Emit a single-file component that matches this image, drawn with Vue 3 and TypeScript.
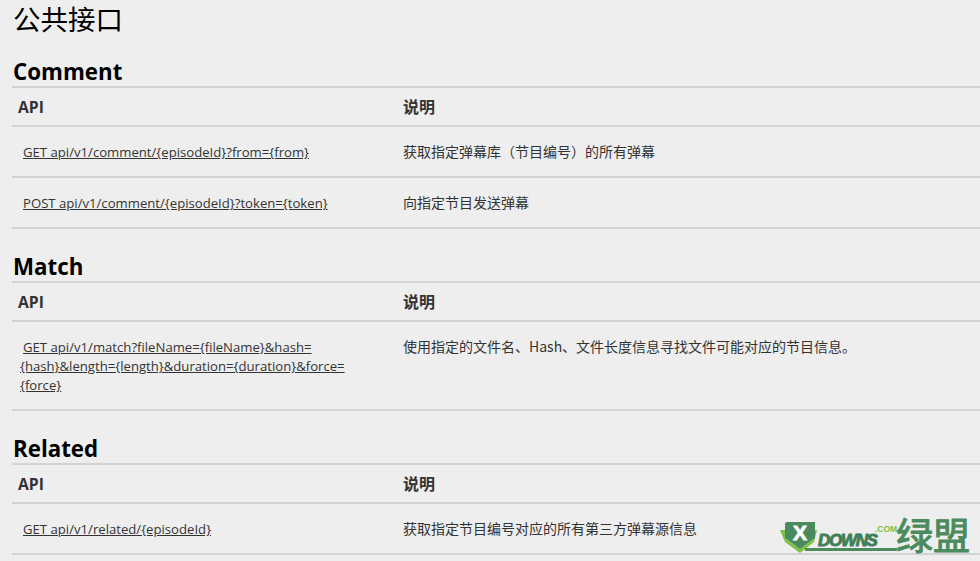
<script setup lang="ts">
interface Row { api: string; desc: string }
interface Section { name: string; rows: Row[] }
const sections: Section[] = [
  { name: 'Comment', rows: [
    { api: 'GET api/v1/comment/{episodeId}?from={from}', desc: '获取指定弹幕库（节目编号）的所有弹幕' },
    { api: 'POST api/v1/comment/{episodeId}?token={token}', desc: '向指定节目发送弹幕' },
  ] },
  { name: 'Match', rows: [
    { api: 'GET api/v1/match?fileName={fileName}&hash={hash}&length={length}&duration={duration}&force={force}', desc: '使用指定的文件名、Hash、文件长度信息寻找文件可能对应的节目信息。' },
  ] },
  { name: 'Related', rows: [
    { api: 'GET api/v1/related/{episodeId}', desc: '获取指定节目编号对应的所有第三方弹幕源信息' },
  ] },
]
</script>

<template>
  <div class="page">
    <h1 class="title">公共接口</h1>
    <section v-for="s in sections" :key="s.name" class="section">
      <h2 class="name">{{ s.name }}</h2>
      <div class="head row">
        <div class="c1">API</div>
        <div class="c2">说明</div>
      </div>
      <div v-for="r in s.rows" :key="r.api" class="body row">
        <div class="c1"><a class="link">{{ r.api }}</a></div>
        <div class="c2">{{ r.desc }}</div>
      </div>
    </section>
    <div class="logo">
      <svg class="shield" width="40" height="36" viewBox="0 0 40 36">
        <path d="M0 10 H6 V19 L20 29 L34 19 V10 H37 L34 22 L20 33 L5 22 Z" fill="#7cc242" />
        <path d="M7 2 H35 V18 L20 29 L5 18 V4 Q5 2 7 2 Z" fill="#4a8a5c" />
      </svg>
      <span class="x">X</span>
      <span class="downs">DOWNS</span>
      <span class="com">.COM</span>
      <span class="cn">绿盟</span>
      <span class="bar"></span>
    </div>
  </div>
</template>

<style>
html, body { margin: 0; background: #eeeeee; }
</style>

<style scoped>
.page {
  position: relative;
  width: 980px;
  height: 561px;
  overflow: hidden;
  padding-left: 12px;
  box-sizing: border-box;
  background: #eeeeee;
  font-family: "Open Sans", "Noto Sans CJK SC", sans-serif;
  color: #333333;
}
.title {
  margin: 0;
  height: 36px;
  padding-left: 1px;
  font-family: "Liberation Serif", "Noto Sans CJK SC", serif;
  font-weight: 400;
  font-size: 27.5px;
  line-height: 42px;
  color: #000;
}
.section { margin-bottom: 20px; }
.section:first-of-type { margin-top: 18px; }
.name {
  margin: 0;
  height: 32px;
  padding-left: 1px;
  font-size: 22.3px;
  line-height: 36px;
  font-weight: 700;
  color: #000;
  white-space: nowrap;
}
.row {
  display: grid;
  grid-template-columns: 391px 1fr;
  border-top: 2px solid #d3d3d3;
  font-size: 13px;
}
.head {
  height: 37px;
  font-size: 16px;
  font-weight: 700;
  line-height: 39px;
}
.head .c1 { padding-left: 6px; font-size: 15.7px; }
.body { padding: 16px 0 14px; line-height: 19px; }
.body:last-child { border-bottom: 2px solid #d3d3d3; }
.body .c1 { padding-left: 8px; padding-right: 30px; text-indent: 3px; font-size: 13.15px; overflow-wrap: anywhere; }
.body .c2 { font-family: "Noto Sans CJK SC", sans-serif; font-size: 14px; line-height: 17px; }
.link { text-decoration: underline; color: #333; }
.logo {
  position: absolute;
  left: 780px;
  top: 516px;
  width: 192px;
  height: 40px;
}
.shield { position: absolute; left: 0; top: 4px; }
.x {
  position: absolute; left: 13px; top: 6px;
  font: 700 21px/22px "Liberation Sans", sans-serif; color: #fff;
  -webkit-text-stroke: 0.8px #fff;
}
.downs {
  position: absolute; left: 38px; top: 15px;
  font: italic 700 17px/20px "Liberation Sans", sans-serif; color: #3f7f58;
  letter-spacing: -1.3px;
  -webkit-text-stroke: 0.9px #3f7f58;
}
.com {
  position: absolute; left: 95px; top: 8px;
  font: 700 8.5px/10px "Liberation Sans", sans-serif; color: #7cc242;
}
.cn {
  position: absolute; left: 116px; top: -2px;
  font: 400 37px/40px "Noto Sans CJK SC", sans-serif; color: #4a8a5c;
  -webkit-text-stroke: 1px #4a8a5c;
}
.bar {
  position: absolute; left: 25px; top: 32px; width: 92px; height: 3px; background: #4a8a5c;
}
</style>
